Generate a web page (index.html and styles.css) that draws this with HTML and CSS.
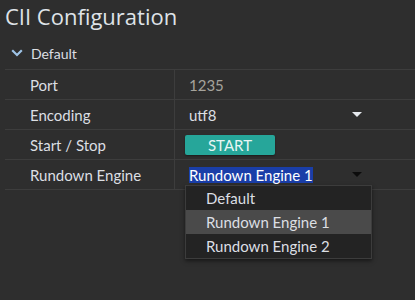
FILE: index.html
```html
<!DOCTYPE html>
<html lang="en">
<head>
    <meta charset="UTF-8">
    <title>CII Configuration</title>
    <link rel="stylesheet" href="styles.css">
</head>
<body>
    <h1 class="page-title">CII Configuration</h1>
    <div class="group">
        <div class="group-header">
            <svg class="chevron" width="12" height="8" viewBox="0 0 12 8">
                <path d="M1.2 1.2 L6 6 L10.8 1.2" fill="none" stroke="#9ec3e6" stroke-width="2.2"/>
            </svg>
            <span>Default</span>
        </div>
        <div class="prop-row">
            <div class="prop-label">Port</div>
            <div class="prop-value dim">1235</div>
        </div>
        <div class="prop-row">
            <div class="prop-label">Encoding</div>
            <div class="prop-value">
                <div class="select">
                    <span>utf8</span>
                    <span class="arrow"></span>
                </div>
            </div>
        </div>
        <div class="prop-row">
            <div class="prop-label">Start / Stop</div>
            <div class="prop-value">
                <button class="start-btn">START</button>
            </div>
        </div>
        <div class="prop-row">
            <div class="prop-label">Rundown Engine</div>
            <div class="prop-value">
                <div class="select open">
                    <span class="selected-text">Rundown Engine 1</span>
                    <span class="arrow dark"></span>
                </div>
                <ul class="dropdown">
                    <li>Default</li>
                    <li class="hover">Rundown Engine 1</li>
                    <li>Rundown Engine 2</li>
                </ul>
            </div>
        </div>
    </div>
</body>
</html>
```
FILE: styles.css
```css
body {
    margin: 0;
    background: #2e2e2e;
    color: #dcdfe3;
    font-family: Lato, 'Open Sans', sans-serif;
    font-size: 15px;
    height: 300px;
    overflow: hidden;
}

.page-title {
    margin: 0;
    padding: 2px 0 0 5px;
    height: 37px;
    box-sizing: border-box;
    font-family: 'Open Sans', sans-serif;
    font-size: 22px;
    font-weight: normal;
    color: #dfe3e8;
    line-height: 28px;
}

.group {
    margin-left: 5px;
}

.group-header {
    display: flex;
    align-items: center;
    height: 32px;
    padding-left: 6px;
    border-bottom: 1px solid #3d3d3d;
    font-size: 14px;
}

.chevron {
    margin-right: 8px;
}

.prop-row {
    display: flex;
    height: 30px;
    border-bottom: 1px solid #3d3d3d;
    box-sizing: border-box;
}

.prop-label {
    width: 170px;
    flex-shrink: 0;
    padding-left: 25px;
    box-sizing: border-box;
    border-right: 1px solid #3d3d3d;
    display: flex;
    align-items: center;
}

.prop-value {
    flex: 1;
    position: relative;
    display: flex;
    align-items: center;
    padding-left: 10px;
}

.dim {
    padding-left: 14px;
    color: #a5a39c;
}

.select {
    width: 185px;
    display: flex;
    align-items: center;
    justify-content: space-between;
    padding-left: 4px;
    box-sizing: border-box;
}

.arrow {
    width: 0;
    height: 0;
    margin-right: 8px;
    border-left: 5px solid transparent;
    border-right: 5px solid transparent;
    border-top: 5px solid #e6e9ee;
}

.arrow.dark {
    border-top-color: #0c0c0c;
}

.selected-text {
    background: #1a3ea8;
    color: #ffffff;
    line-height: 16px;
}

.start-btn {
    width: 90px;
    height: 20px;
    border: none;
    border-radius: 2px;
    background: #26a69a;
    color: #e8f6f4;
    font-family: inherit;
    font-size: 15px;
    line-height: 20px;
    padding: 0;
    box-shadow: 0 1px 2px rgba(0, 0, 0, 0.4);
}

.dropdown {
    position: absolute;
    top: 25px;
    left: 10px;
    width: 185px;
    margin: 0;
    padding: 0;
    list-style: none;
    background: #232323;
    border: 1px solid #3c3c3c;
    box-shadow: 0 2px 4px rgba(0, 0, 0, 0.5);
    z-index: 2;
}

.dropdown li {
    height: 24px;
    line-height: 24px;
    padding-left: 20px;
}

.dropdown li.hover {
    background: #4a4a4a;
}
```
